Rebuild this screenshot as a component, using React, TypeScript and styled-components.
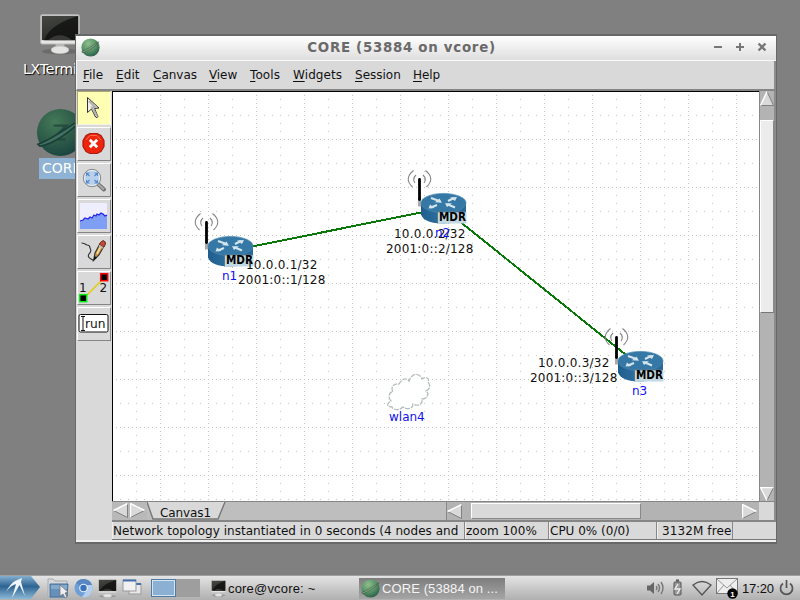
import React from "react";
import styled, { createGlobalStyle } from "styled-components";

const Global = createGlobalStyle`
  html, body { margin: 0; padding: 0; overflow: hidden; }
  * { box-sizing: border-box; }
  svg { display: block; flex: none; }
`;

const Desktop = styled.div`
  position: relative;
  width: 800px;
  height: 600px;
  overflow: hidden;
  background: #808080;
  display: flex;
  flex-direction: column;
  justify-content: flex-end;
  font-family: "DejaVu Sans", sans-serif;
`;

const Label = styled.span<{ $size?: number; $ls?: number }>`
  display: inline-block;
  white-space: pre;
  font-size: ${(p) => p.$size ?? 12}px;
  letter-spacing: ${(p) => p.$ls ?? 0}px;
`;

const Shortcut = styled.div<{ $x: number; $y: number }>`
  position: absolute;
  left: ${(p) => p.$x}px;
  top: ${(p) => p.$y}px;
  display: flex;
  flex-direction: column;
`;

const ShortcutText = styled.div<{ $selected?: boolean }>`
  height: 21px;
  line-height: 21px;
  padding: 0 3px;
  white-space: nowrap;
  color: #fff;
  font-size: 14px;
  letter-spacing: ${(p) => (p.$selected ? 0 : -0.2)}px;
  background: ${(p) => (p.$selected ? "#8fb3d4" : "transparent")};
  text-shadow: ${(p) => (p.$selected ? "none" : "1px 1px 1px #000")};
`;

const Window = styled.div`
  position: absolute;
  left: 75px;
  top: 34px;
  width: 702px;
  height: 510px;
  border: 1px solid #686868;
  border-top-width: 2px;
  border-bottom-width: 2px;
  background: #d9d9d9;
  display: flex;
  flex-direction: column;
`;

const TitleBar = styled.div`
  height: 25px;
  flex: none;
  display: flex;
  align-items: center;
  padding: 0 9px 2px 5px;
  background: linear-gradient(#fff, #f0f0f0 45%, #dedede);
  border-bottom: 1px solid #fbfbfb;
`;

const Title = styled.div`
  flex: 1;
  padding-right: 10px;
  text-align: center;
  color: #6a6a6a;
  font: bold 13.4px "DejaVu Sans", sans-serif;
  letter-spacing: 0.7px;
`;

const WindowButtons = styled.div`
  display: flex;
  gap: 12px;
`;

const MenuBar = styled.div`
  height: 30px;
  flex: none;
  display: flex;
  align-items: center;
  padding: 0 0 1px 6px;
  border-left: 1px solid #f5f5f5;
  border-right: 2px solid #8c8c8c;
  border-bottom: 2px solid #858585;
`;

const MenuItem = styled.div<{ $w: number; $ls: number }>`
  width: ${(p) => p.$w}px;
  font-size: 12px;
  letter-spacing: ${(p) => p.$ls}px;
  color: #111;
  &::first-letter { text-decoration: underline; }
  text-underline-offset: 2px;
`;

const Body = styled.div`
  flex: 1;
  display: flex;
  min-height: 0;
`;

const ToolBar = styled.div`
  width: 36px;
  flex: none;
  display: flex;
  flex-direction: column;
  gap: 2px;
  padding: 0 1px;
`;

const ToolButton = styled.div<{ $active?: boolean }>`
  width: 34px;
  height: 34px;
  display: flex;
  align-items: center;
  justify-content: center;
  background: ${(p) => (p.$active ? "#ffffb4" : "#d9d9d9")};
  border: 1px solid;
  border-color: ${(p) => (p.$active ? "#a8a878 #f4f4e0 #f4f4e0 #a8a878" : "#fff #868686 #868686 #fff")};
`;

const Main = styled.div`
  flex: 1;
  display: flex;
  flex-direction: column;
  min-width: 0;
`;

const Work = styled.div`
  height: 411px;
  display: flex;
`;

const CanvasArea = styled.div`
  position: relative;
  width: 648px;
  overflow: hidden;
  background: #fff;
  border-top: 1px solid #000;
  border-left: 1px solid #000;
`;

const Layer = styled.svg`
  position: absolute;
  inset: 0;
`;

const Placed = styled.div<{ $x: number; $y: number }>`
  position: absolute;
  left: ${(p) => p.$x}px;
  top: ${(p) => p.$y}px;
  line-height: 15px;
`;

const Address = styled(Placed)`
  display: flex;
  flex-direction: column;
  align-items: center;
  color: #111;
`;

const NodeName = styled(Placed)`
  color: #1010f0;
`;

const VScroll = styled.div`
  flex: 1;
  display: flex;
  flex-direction: column;
  background: #b3b3b3;
  border-left: 1px solid #888;
  border-right: 2px solid #8c8c8c;
`;

const VThumb = styled.div`
  height: 193px;
  margin: 14px 0 174px;
  background: #ececec;
  border: 1px solid;
  border-color: #fff #888 #777 #fff;
`;

const TabRow = styled.div`
  height: 19px;
  display: flex;
  background: #bebebe;
  border-top: 1px solid #858585;
  border-right: 2px solid #8c8c8c;
`;

const PageArrows = styled.div`
  width: 35px;
  display: flex;
  gap: 2px;
  padding: 1px 0 0 1px;
  background: #b9b9b9;
`;

const Tab = styled.div`
  position: relative;
  width: 79px;
  height: 18px;
`;

const TabText = styled.div`
  position: absolute;
  left: 13px;
  top: 2px;
  line-height: 16px;
  color: #111;
`;

const HScroll = styled.div`
  margin-left: auto;
  width: 313px;
  display: flex;
  align-items: center;
  background: #b3b3b3;
  border-left: 1px solid #888;
`;

const HThumb = styled.div`
  width: 170px;
  height: 16px;
  margin: 0 101px 0 9px;
  background: #d9d9d9;
  border: 1px solid;
  border-color: #fff #888 #888 #fff;
`;

const Corner = styled.div`
  width: 15px;
  height: 18px;
  background: #d9d9d9;
`;

const StatusBar = styled.div`
  height: 21px;
  display: flex;
  border-top: 2px solid #858585;
  border-bottom: 1px solid #777;
`;

const StatusCell = styled.div<{ $w: number; $pad?: number }>`
  width: ${(p) => p.$w}px;
  padding-left: ${(p) => p.$pad ?? 0}px;
  border-right: 1px solid #888;
  border-left: 1px solid #eee;
  line-height: 15px;
  color: #111;
  overflow: hidden;
`;

const Handle = styled.div`
  height: 2px;
  flex: none;
  background: #f0f0f0;
`;

const TaskBar = styled.div`
  height: 25px;
  flex: none;
  display: flex;
  align-items: center;
  border-top: 1px solid #a0a0a0;
  background: linear-gradient(#e4e4e4, #c9c9c9 50%, #b0b0b0);
  font-family: "Liberation Sans", sans-serif;
  font-size: 13px;
  color: #111;
`;

const StartButton = styled.div`
  width: 41px;
  height: 24px;
`;

const Launchers = styled.div`
  display: flex;
  align-items: center;
  gap: 5px;
  padding-left: 6px;
`;

const Pager = styled.div`
  display: flex;
  margin-left: 9px;
`;

const Desk = styled.div<{ $on?: boolean }>`
  width: ${(p) => (p.$on ? 25 : 24)}px;
  height: 18px;
  background: ${(p) => (p.$on ? "#8bb0d3" : "#9e9e9e")};
  border: ${(p) => (p.$on ? "1px solid #4d7ba6" : "0")};
  box-shadow: ${(p) => (p.$on ? "inset 0 0 0 1px #d8e3ee" : "none")};
`;

const Task = styled.div<{ $w: number; $active?: boolean }>`
  width: ${(p) => p.$w}px;
  height: 21px;
  display: flex;
  align-items: center;
  gap: 2px;
  padding-left: 2px;
  white-space: nowrap;
  color: ${(p) => (p.$active ? "#f4f4f4" : "#111")};
  background: ${(p) => (p.$active ? "linear-gradient(#7d7d7d, #a5a5a5)" : "transparent")};
`;

const Tray = styled.div`
  display: flex;
  align-items: center;
  margin-left: auto;
  padding-right: 6px;
`;

const Gap = styled.div<{ $w: number }>`
  width: ${(p) => p.$w}px;
`;

function Globe({ size, dark }: { size: number; dark?: boolean }) {
  const id = "globe" + size;
  return (
    <svg width={size} height={size} viewBox="0 0 50 50">
      <defs>
        <radialGradient id={id} cx="38%" cy="28%" r="75%">
          <stop offset="0" stopColor={dark ? "#447a58" : "#8fbe8c"} />
          <stop offset=".55" stopColor={dark ? "#2e5c49" : "#589468"} />
          <stop offset="1" stopColor={dark ? "#1a4540" : "#2c5e4b"} />
        </radialGradient>
      </defs>
      <circle cx="25" cy="25" r="24" fill={`url(#${id})`} />
      {dark && <path d="M18 18H31L17 32H30" fill="none" stroke="#1c3f38" strokeWidth="2.5" opacity=".7" />}
      <path
        d={dark ? "M2 37C13 34 34 19 48 10C37 24 17 37 4 39Z" : "M2 36C14 32 34 18 47 10C37 23 17 35 4 39Z"}
        fill={dark ? "#3f6f62" : "#8fae8c"}
        stroke={dark ? "#193c33" : "#34513a"}
        strokeWidth="1.5"
      />
    </svg>
  );
}

function Monitor({ w, h, id }: { w: number; h: number; id: string }) {
  return (
    <svg width={w} height={h} viewBox="0 0 40 40" preserveAspectRatio="none">
      <defs>
        <linearGradient id={id} x1="0" y1="0" x2=".3" y2="1">
          <stop offset="0" stopColor="#454742" /><stop offset="1" stopColor="#2b2c2a" />
        </linearGradient>
      </defs>
      <ellipse cx="20" cy="36.5" rx="18" ry="3" fill="#000" opacity=".16" />
      <path d="M16 28h8l1 6h-10z" fill="#bbb" />
      <ellipse cx="20" cy="35" rx="9" ry="3.8" fill="#e4e4e2" stroke="#aaa" strokeWidth=".5" />
      <rect x=".7" y=".7" width="38.6" height="28.5" rx="1.5" fill="#e6e6e4" stroke="#b8b8b6" />
      <rect x="1.8" y="1.8" width="36.4" height="23.7" fill={`url(#${id})`} />
      <path d="M38.2 2C22 7 9 13 4 25.5H38.2Z" fill="#0e0f0e" opacity=".75" />
      <path d="M8 25.5Q20 16 32 25.5Z" fill="#888" opacity=".3" />
    </svg>
  );
}

function Arrow({ dir, w, h }: { dir: "l" | "r" | "u" | "d"; w: number; h: number }) {
  const pts = {
    l: [[0.5, h / 2], [w - 0.5, 0.5], [w - 0.5, h - 0.5]],
    r: [[w - 0.5, h / 2], [0.5, h - 0.5], [0.5, 0.5]],
    u: [[w / 2, 0.5], [w - 0.5, h - 0.5], [0.5, h - 0.5]],
    d: [[w / 2, h - 0.5], [0.5, 0.5], [w - 0.5, 0.5]],
  }[dir];
  const [a, b, c] = pts.map((p) => p.join(" "));
  const light = { l: `M${a}L${b}`, r: `M${b}L${c}L${a}`, u: `M${a}L${c}`, d: `M${a}L${b}L${c}` }[dir];
  const shade = { l: `M${b}L${c}L${a}`, r: `M${a}L${b}`, u: `M${a}L${b}L${c}`, d: `M${a}L${c}` }[dir];
  return (
    <svg width={w} height={h}>
      <path d={`M${a}L${b}L${c}Z`} fill="#d9d9d9" />
      <path d={shade} fill="none" stroke="#808080" />
      <path d={light} fill="none" stroke="#fff" strokeWidth="1.4" />
    </svg>
  );
}

const CursorIcon = () => (
  <svg width="32" height="32">
    <path d="M9.5 5.5V20.5L13.5 17L17.5 25Q19.5 26.5 20 24.5L16.5 16.5L21 16Z" fill="#eee" stroke="#333" />
    <path d="M11 9L17 15L14 15.5L19 24" fill="none" stroke="#b2b2ad" strokeWidth="2" />
  </svg>
);
const DeleteIcon = () => (
  <svg width="32" height="32">
    <path d="M12 5.5h7l4 2l3 5v6l-3 5l-4 2h-7l-4-2l-3-5v-6l3-5Z" fill="#ef240c" stroke="#a61c10" strokeLinejoin="round" strokeWidth="1.2" />
    <path d="M8 12L12 7.5H19L23 12" fill="none" stroke="#ff6a4c" />
    <path d="M11.8 11.8L19.2 19.2M19.2 11.8L11.8 19.2" stroke="#fff" strokeWidth="2.8" />
  </svg>
);
const ZoomIcon = () => (
  <svg width="32" height="32">
    <path d="M20 20L26 25.5" stroke="#70716c" strokeWidth="4" strokeLinecap="round" />
    <path d="M20 20L26 25.5" stroke="#aaa" strokeWidth="2" />
    <circle cx="14" cy="14" r="8.7" fill="#b8d0ec" stroke="#898c87" />
    <circle cx="14" cy="14" r="7.5" fill="none" stroke="#eaf1f5" />
    <path d="M8.5 12V9H11.5M16.5 9H19.5V12M19.5 16V19H16.5M11.5 19H8.5V16M8.5 9L11.5 12M19.5 9L16.5 12M8.5 19L11.5 16M19.5 19L16.5 16" fill="none" stroke="#5688c8" strokeWidth="1.2" />
  </svg>
);
const GraphIcon = () => (
  <svg width="32" height="32">
    <rect x="2" y="3" width="27" height="26" fill="#eeeeff" />
    <path d="M2 21L5 20L7 18L10 19L12 17L14 18L16 15L18 16L19 14L21 15L23 13L25 14L27 16L29 15V29H2Z" fill="#7f9ff4" />
    <path d="M2 21L5 20L7 18L10 19L12 17L14 18L16 15L18 16L19 14L21 15L23 13L25 14L27 16L29 15" fill="none" stroke="#2424e8" strokeWidth="1.3" />
  </svg>
);
const PencilIcon = () => (
  <svg width="32" height="32">
    <path d="M3.5 7Q6 7 9 9Q12 9 12 12Q14 15 11 18Q9 21 13 23Q16 25 15 24" fill="none" stroke="#333" strokeWidth="1.1" />
    <path d="M15.5 24.5L17 17L22 7.5Q26 2.5 27.5 7.5L21 19Z" fill="#c8923d" stroke="#333" strokeWidth="1.1" />
    <path d="M19 18L24 8" stroke="#f1d591" strokeWidth="1.8" />
    <path d="M22.5 6.5Q26 2.5 27.5 7.5L26 11L21.5 8.5Z" fill="#cd4638" stroke="#673326" />
    <path d="M21 9.5L25 12" stroke="#b9b9b9" strokeWidth="1.6" />
    <path d="M15.5 24.5L16.5 20L19 21.5Z" fill="#111" />
  </svg>
);
const TwoNodeIcon = () => (
  <svg width="32" height="32">
    <path d="M6 26L26 6" stroke="#e5cc00" strokeWidth="1.5" />
    <rect x="1.7" y="22.7" width="7" height="7" fill="#000" stroke="#00ee12" strokeWidth="1.5" />
    <rect x="22.7" y="1.7" width="7" height="7" fill="#000" stroke="#f00" strokeWidth="1.5" />
    <text x="1" y="20" fontSize="12" fill="#111">1</text>
    <text x="21.5" y="20" fontSize="12" fill="#111">2</text>
  </svg>
);
const RunIcon = () => (
  <svg width="32" height="32">
    <rect x="1" y="6.5" width="29" height="17.5" rx="1.5" fill="#fff" stroke="#111" />
    <path d="M3 8.5H7M5 8.5V22.5M3 22.5H7" stroke="#111" fill="none" />
    <text x="7" y="20" fontSize="12.5" textLength="20.5" lengthAdjust="spacingAndGlyphs" fill="#111">run</text>
  </svg>
);

const grid = (() => {
  const minor: string[] = [], major: string[] = [];
  for (let i = 0; i < 27; i++) (i % 2 ? major : minor).push(`M${23.5 + i * 24} 0V410`);
  for (let i = 0; i < 17; i++) (i % 2 ? major : minor).push(`M0 ${23.5 + i * 24}H647`);
  return { minor: minor.join(""), major: major.join("") };
})();

function Router({ x, y }: { x: number; y: number }) {
  return (
    <g transform={`translate(${x} ${y})`}>
      <g fill="none" stroke="#858585" strokeWidth="1.1">
        <path d="M-27 -27.5Q-31 -23.5 -28 -19.5M-20 -27.5Q-16 -23.5 -19 -19.5" />
        <path d="M-29.5 -32Q-39.5 -24 -30.5 -15.5M-17.5 -32Q-7.5 -24 -16.5 -15.5" />
      </g>
      <path d="M-23.5 -5V4" stroke="#aaa" strokeWidth="3" />
      <path d="M-23.5 -23V-3" stroke="#000" strokeWidth="2.8" strokeLinecap="round" />
      <path d="M-22 0V12C-20 18 -12 21 0 21C12 21 22 18 23 12V0Z" fill="url(#routerSide)" />
      <ellipse cx="0.5" cy="0.5" rx="22.5" ry="9.6" fill="#3578a5" stroke="#4c8ab1" strokeWidth=".7" />
      <g fill="none" stroke="#d5e5ec" strokeWidth="2">
        <path d="M-12 -4.5L-5 -2M5 -1.5L11 -4.5M-12 5L-6 2.5M5 2L12 5" />
      </g>
      <g fill="#d5e5ec">
        <path d="M-1 .2L-8 -.2L-3.5 -4ZM14 -5.5L12 -1.5L7 -5ZM-14.5 6L-13 2L-8.5 5.5ZM2 .7L9 .7L4 4.5Z" />
      </g>
      <rect x="-5" y="9.5" width="28.5" height="11.5" fill="#c2d9e2" />
      <path d="M-5.5 21V9.5H23" fill="none" stroke="#5f7a88" strokeWidth=".8" />
      <text x="-4" y="18.7" fontSize="11.5" fontWeight="bold" textLength="27" lengthAdjust="spacingAndGlyphs" fill="#000">MDR</text>
    </g>
  );
}

function Topology() {
  return (
    <Layer width="647" height="410" fontFamily="DejaVu Sans">
      <defs>
        <linearGradient id="routerSide">
          <stop offset="0" stopColor="#205d8d" /><stop offset=".5" stopColor="#2f73a2" /><stop offset="1" stopColor="#2a6895" />
        </linearGradient>
      </defs>
      <g stroke="#c4c4c4" shapeRendering="crispEdges">
        <path d={grid.minor} strokeDasharray="1 7" strokeDashoffset="1" />
        <path d={grid.major} strokeDasharray="1 3" strokeDashoffset="1" />
      </g>
      <path d="M117 159L330 116L528 275" fill="none" stroke="#087908" strokeWidth="2" shapeRendering="crispEdges" />
      <Router x={117} y={153.5} />
      <Router x={330} y={110.5} />
      <Router x={527} y={268.5} />
      <path
        d="M278 309C274 305 277 299 280 300C277 295 281 291 286 292C289 287 293 285 296 289C299 280 307 281 309 287C313 284 317 286 315 290C318 294 317 297 313 299C317 302 314 307 309 307C310 312 306 315 300 312C300 317 294 318 290 315C286 319 280 318 279 315C274 315 273 312 278 309Z"
        fill="#fff" stroke="#b3bdb9" strokeWidth="1.3" strokeDasharray="5 1"
      />
    </Layer>
  );
}

const menus: [string, number, number][] = [
  ["File", 33, 0], ["Edit", 37, 0.1], ["Canvas", 56, 0], ["View", 41, -0.1],
  ["Tools", 43, 0.1], ["Widgets", 62, 0.1], ["Session", 58, 0], ["Help", 40, -0.1],
];

export default function App() {
  return (
    <Desktop>
      <Global />
      <Shortcut $x={40} $y={14}><Monitor w={40} h={41} id="mon1" /></Shortcut>
      <Shortcut $x={20} $y={59}><ShortcutText>LXTerminal</ShortcutText></Shortcut>
      <Shortcut $x={36} $y={108}><Globe size={49} dark /></Shortcut>
      <Shortcut $x={39} $y={158}><ShortcutText $selected>CORE</ShortcutText></Shortcut>

      <Window>
        <TitleBar>
          <Globe size={19} />
          <Title>CORE (53884 on vcore)</Title>
          <WindowButtons>
            <svg width="10" height="10"><path d="M1 5H9" stroke="#777" strokeWidth="2" /></svg>
            <svg width="10" height="10"><path d="M1 5H9M5 1V9" stroke="#777" strokeWidth="2" /></svg>
            <svg width="10" height="10"><path d="M1.5 1.5L8.5 8.5M8.5 1.5L1.5 8.5" stroke="#777" strokeWidth="2.3" /></svg>
          </WindowButtons>
        </TitleBar>
        <MenuBar>
          {menus.map(([name, w, ls]) => <MenuItem key={name} $w={w} $ls={ls}>{name}</MenuItem>)}
        </MenuBar>
        <Body>
          <ToolBar>
            <ToolButton $active><CursorIcon /></ToolButton>
            <ToolButton><DeleteIcon /></ToolButton>
            <ToolButton><ZoomIcon /></ToolButton>
            <ToolButton><GraphIcon /></ToolButton>
            <ToolButton><PencilIcon /></ToolButton>
            <ToolButton><TwoNodeIcon /></ToolButton>
            <ToolButton><RunIcon /></ToolButton>
          </ToolBar>
          <Main>
            <Work>
              <CanvasArea>
                <Topology />
                <Address $x={125} $y={166}>
                  <Label $ls={0.25}>10.0.0.1/32</Label><Label $ls={0.2}>2001:0::1/128</Label>
                </Address>
                <Address $x={273} $y={135}>
                  <Label $ls={0.25}>10.0.0.2/32</Label><Label $ls={0.2}>2001:0::2/128</Label>
                </Address>
                <Address $x={417} $y={264}>
                  <Label $ls={0.25}>10.0.0.3/32</Label><Label $ls={0.2}>2001:0::3/128</Label>
                </Address>
                <NodeName $x={109} $y={175}><Label>n1</Label></NodeName>
                <NodeName $x={322} $y={132}><Label>n2</Label></NodeName>
                <NodeName $x={519} $y={290}><Label>n3</Label></NodeName>
                <NodeName $x={276} $y={316}><Label>wlan4</Label></NodeName>
              </CanvasArea>
              <VScroll>
                <Arrow dir="u" w={14} h={15} />
                <VThumb />
                <Arrow dir="d" w={14} h={14} />
              </VScroll>
            </Work>
            <TabRow>
              <PageArrows><Arrow dir="l" w={15} h={15} /><Arrow dir="r" w={15} h={15} /></PageArrows>
              <Tab>
                <svg width="79" height="18">
                  <path d="M0 0H78L71 17H6Z" fill="#d9d9d9" />
                  <path d="M0 0L6 17H71L78 0" fill="none" stroke="#777" strokeWidth="1.4" />
                </svg>
                <TabText><Label $ls={-0.1}>Canvas1</Label></TabText>
              </Tab>
              <HScroll>
                <Arrow dir="l" w={15} h={15} />
                <HThumb />
                <Arrow dir="r" w={15} h={15} />
              </HScroll>
              <Corner />
            </TabRow>
            <StatusBar>
              <StatusCell $w={353}><Label $ls={0.03}>Network topology instantiated in 0 seconds (4 nodes and</Label></StatusCell>
              <StatusCell $w={84}><Label>zoom 100%</Label></StatusCell>
              <StatusCell $w={108}><Label>CPU 0% (0/0)</Label></StatusCell>
              <StatusCell $w={76} $pad={4}><Label $ls={0.1}>3132M free</Label></StatusCell>
            </StatusBar>
          </Main>
        </Body>
        <Handle />
      </Window>

      <TaskBar>
        <StartButton>
          <svg width="41" height="24">
            <defs><linearGradient id="start" x2="0" y2="1"><stop stopColor="#84afd0" /><stop offset=".45" stopColor="#2d6493" /><stop offset="1" stopColor="#8db8d5" /></linearGradient></defs>
            <path d="M0 0H31L40 11L31 23H0Z" fill="url(#start)" />
            <path d="M6 16Q10 8 15 5L22 2L21 6L25 20L19.5 9L12 22L16 8Q11 9 6 16Z" fill="#f2f6fa" />
          </svg>
        </StartButton>
        <Launchers>
          <svg width="22" height="22">
            <path d="M1 2H6L8 4H20V20H1Z" fill="#d4d8dc" stroke="#aaa" />
            <path d="M3 7H21L20 20H3Z" fill="#668fb9" stroke="#47719c" /><path d="M4 8H20V12H4Z" fill="#83a9cb" />
            <path d="M13 8V19L16 17L18 21L20 20L18 16L21 15Z" fill="#eee" stroke="#777" strokeWidth=".8" />
          </svg>
          <svg width="19" height="20">
            <circle cx="9.5" cy="10" r="9" fill="#6f9fd4" />
            <path d="M9.5 10L2 5A9 9 0 0 1 18 7H10Z" fill="#5788c2" /><path d="M18 7A9 9 0 0 1 8 19L13 12L12 7Z" fill="#b4cfee" />
            <circle cx="9.5" cy="10" r="4.3" fill="#eaf2fb" /><circle cx="9.5" cy="10" r="3.2" fill="#3974ba" />
          </svg>
          <Monitor w={19} h={19} id="mon2" />
          <svg width="20" height="20">
            <rect x="7" y="6" width="12" height="10" fill="#e8e8e8" stroke="#999" /><path d="M7 6H19" stroke="#4570ad" strokeWidth="2" />
            <rect x="1" y="2" width="13" height="11" fill="#f1f1f1" stroke="#999" /><path d="M1 2.5H14" stroke="#4570ad" strokeWidth="2" />
          </svg>
        </Launchers>
        <Pager><Desk $on /><Desk /></Pager>
        <Gap $w={9} />
        <Task $w={150}><Monitor w={15} h={17} id="mon3" /><Label $size={13} $ls={0.18}>core@vcore: ~</Label></Task>
        <Task $w={146} $active><Globe size={19} /><Label $size={13} $ls={0.1}>CORE (53884 on ...</Label></Task>
        <Tray>
          <svg width="19" height="18">
            <path d="M1 6.5H4L8 3V15L4 11.5H1Z" fill="#666" />
            <path d="M10 7Q12 9 10 11M12 5Q15 9 12 13M15 3Q19 9 15 15" fill="none" stroke="#777" strokeWidth="1.4" />
          </svg>
          <Gap $w={8} />
          <svg width="9" height="18">
            <rect x="1" y="3" width="7" height="13" rx="1" fill="#999" stroke="#555" /><path d="M3 1.5H6" stroke="#555" strokeWidth="2" />
            <path d="M5 5L2 10H7L4 15" fill="none" stroke="#eee" strokeWidth="1.4" />
          </svg>
          <Gap $w={10} />
          <svg width="20" height="17"><path d="M1 5Q10 -2 19 5L10 15Z" fill="none" stroke="#555" strokeWidth="1.3" /></svg>
          <Gap $w={4} />
          <svg width="22" height="22">
            <rect x=".5" y="1.5" width="21" height="15" fill="#eee" stroke="#777" />
            <path d="M1 2L11 11L21 2M1 16L8 8M21 16L14 8" fill="none" stroke="#999" />
            <circle cx="16.5" cy="16.5" r="5.2" fill="#050505" />
            <text x="14.3" y="19.5" fontSize="8" fontWeight="bold" fill="#fff">1</text>
          </svg>
          <Gap $w={4} />
          <Label $size={13} $ls={-0.1}>17:20</Label>
          <Gap $w={5} />
          <svg width="15" height="16"><path d="M4 3.5A6 6 0 1 0 11 3.5M7.5 0V8" fill="none" stroke="#555" strokeWidth="1.7" /></svg>
        </Tray>
      </TaskBar>
    </Desktop>
  );
}
